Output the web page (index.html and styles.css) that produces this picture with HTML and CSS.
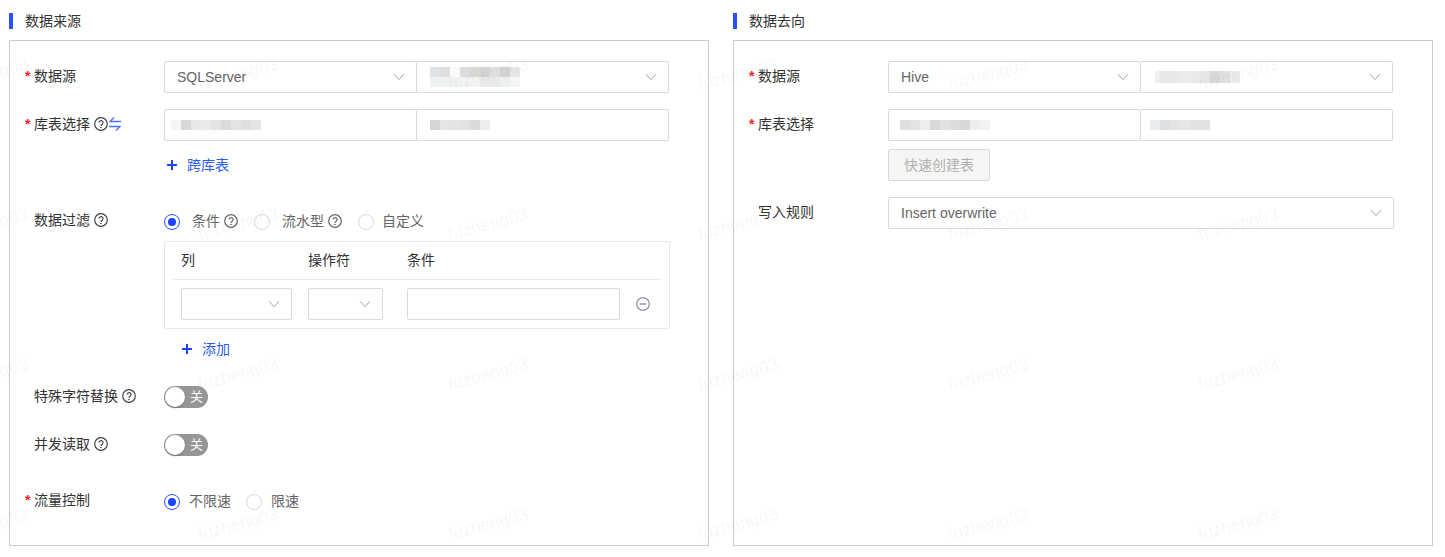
FILE: index.html
```html
<!DOCTYPE html>
<html lang="zh-CN">
<head>
<meta charset="utf-8">
<title>数据同步</title>
<link rel="stylesheet" href="styles.css">
</head>
<body>
<svg class="defs" width="0" height="0" aria-hidden="true">
  <symbol id="i-help" viewBox="0 0 14 14"><circle cx="7" cy="7" r="6.3" fill="none" stroke="currentColor" stroke-width="1.2"/><path d="M5 5.6a2 2 0 1 1 3.2 1.6c-.8.5-1.2.9-1.2 1.7" fill="none" stroke="currentColor" stroke-width="1.2"/><circle cx="7" cy="10.5" r=".8" fill="currentColor"/></symbol>
  <symbol id="i-down" viewBox="0 0 12 8"><path d="M1 1.2l5 5.4 5-5.4" fill="none" stroke="currentColor" stroke-width="1"/></symbol>
  <symbol id="i-plus" viewBox="0 0 12 12"><path d="M6 1v10M1 6h10" fill="none" stroke="currentColor" stroke-width="2"/></symbol>
  <symbol id="i-swap" viewBox="0 0 14 14"><path d="M13 4.5H2l4-4M1 9.500h11l-4 4" fill="none" stroke="currentColor" stroke-width="1.300"/></symbol>
  <symbol id="i-minus" viewBox="0 0 14 14"><circle cx="7" cy="7" r="6.300" fill="none" stroke="currentColor" stroke-width="1.200"/><path d="M4 7h6" fill="none" stroke="currentColor" stroke-width="1.400"/></symbol>
</svg>

<main class="page">
  <section class="panel">
    <h2 class="title">数据来源</h2>
    <div class="box">
      <div class="row row-first">
        <div class="label"><span class="star">*</span>数据源</div>
        <div class="split">
          <div class="select"><span class="value">SQLServer</span><svg class="chev"><use href="#i-down"/></svg></div>
          <div class="select"><span class="mosaic m-b"></span><svg class="chev"><use href="#i-down"/></svg></div>
        </div>
      </div>
      <div class="row row-next">
        <div class="label"><span class="star">*</span>库表选择<svg class="help"><use href="#i-help"/></svg><svg class="swap"><use href="#i-swap"/></svg></div>
        <div class="split">
          <div class="select"><span class="mosaic m-a"></span></div>
          <div class="select"><span class="mosaic m-c"></span></div>
        </div>
      </div>
      <div class="row row-tight">
        <div class="label"></div>
        <a class="link link-cross"><svg class="plus"><use href="#i-plus"/></svg>跨库表</a>
      </div>

      <div class="row row-filter">
        <div class="label label-sm"><span class="star"></span>数据过滤<svg class="help"><use href="#i-help"/></svg></div>
        <div class="stack">
          <div class="radios">
            <label class="radio radio-wide is-on"><i></i>条件<svg class="help help-soft"><use href="#i-help"/></svg></label>
            <label class="radio radio-wide"><i></i>流水型<svg class="help help-soft"><use href="#i-help"/></svg></label>
            <label class="radio radio-tight"><i></i>自定义</label>
          </div>
          <div class="table">
            <div class="thead"><span class="c1">列</span><span class="c2">操作符</span><span class="c3">条件</span></div>
            <div class="tbody">
              <div class="select c1"><svg class="chev"><use href="#i-down"/></svg></div>
              <div class="select c2"><svg class="chev"><use href="#i-down"/></svg></div>
              <div class="select c3"></div>
              <svg class="minus"><use href="#i-minus"/></svg>
            </div>
          </div>
          <a class="link link-add"><svg class="plus"><use href="#i-plus"/></svg>添加</a>
        </div>
      </div>

      <div class="row row-switch1">
        <div class="label label-sm"><span class="star"></span>特殊字符替换<svg class="help"><use href="#i-help"/></svg></div>
        <div class="switch"><i></i><span>关</span></div>
      </div>
      <div class="row row-switch2">
        <div class="label label-sm"><span class="star"></span>并发读取<svg class="help"><use href="#i-help"/></svg></div>
        <div class="switch"><i></i><span>关</span></div>
      </div>
      <div class="row row-flow">
        <div class="label label-sm"><span class="star">*</span>流量控制</div>
        <div class="radios">
          <label class="radio is-on"><i></i>不限速</label>
          <label class="radio"><i></i>限速</label>
        </div>
      </div>
    </div>
  </section>

  <section class="panel">
    <h2 class="title">数据去向</h2>
    <div class="box">
      <div class="row row-first">
        <div class="label"><span class="star">*</span>数据源</div>
        <div class="split">
          <div class="select"><span class="value">Hive</span><svg class="chev"><use href="#i-down"/></svg></div>
          <div class="select"><span class="mosaic m-e"></span><svg class="chev"><use href="#i-down"/></svg></div>
        </div>
      </div>
      <div class="row row-next">
        <div class="label"><span class="star">*</span>库表选择</div>
        <div class="split">
          <div class="select"><span class="mosaic m-d"></span></div>
          <div class="select"><span class="mosaic m-f"></span></div>
        </div>
      </div>
      <div class="row row-tight">
        <div class="label"></div>
        <button class="btn" type="button" disabled>快速创建表</button>
      </div>
      <div class="row row-next">
        <div class="label"><span class="star"></span>写入规则</div>
        <div class="select select-full"><span class="value">Insert overwrite</span><svg class="chev"><use href="#i-down"/></svg></div>
      </div>
    </div>
  </section>
</main>

<div class="marks" aria-hidden="true">
  <div class="marks-grid">
    <span>fuzheng03</span><span>fuzheng03</span><span>fuzheng03</span><span>fuzheng03</span><span>fuzheng03</span><span>fuzheng03</span>
    <span>fuzheng03</span><span>fuzheng03</span><span>fuzheng03</span><span>fuzheng03</span><span>fuzheng03</span><span>fuzheng03</span>
    <span>fuzheng03</span><span>fuzheng03</span><span>fuzheng03</span><span>fuzheng03</span><span>fuzheng03</span><span>fuzheng03</span>
    <span>fuzheng03</span><span>fuzheng03</span><span>fuzheng03</span><span>fuzheng03</span><span>fuzheng03</span><span>fuzheng03</span>
  </div>
</div>
</body>
</html>
```

FILE: styles.css
```css
* { box-sizing: border-box; }
html, body { margin: 0; height: 100%; }
body {
  position: relative;
  overflow: hidden;
  background: #fff;
  color: #333;
  font: 14px/20px "Liberation Sans", "Noto Sans CJK SC", sans-serif;
}
.defs { position: absolute; }

.page { display: flex; gap: 24px; padding: 13px 0 0 9px; }
.panel { width: 700px; flex: none; }
.title {
  margin: 0 0 11px;
  border-left: 4px solid #2b50ff;
  padding-left: 12px;
  font-size: 14px;
  font-weight: 400;
  line-height: 16px;
}
.box { height: 506px; border: 1px solid #ccc; padding: 0 0 0 15px; }

.row { display: flex; align-items: flex-start; }
.row-first { margin-top: 20px; }
.row-next { margin-top: 16px; }
.row-tight { margin-top: 8px; }
.row-filter { margin-top: 29px; }
.row-switch1 { margin-top: 21px; }
.row-switch2 { margin-top: 26px; }
.row-flow { margin-top: 34px; }

.label { width: 139px; flex: none; display: flex; align-items: center; line-height: 30px; white-space: nowrap; }
.label-sm { line-height: 20px; }
.star { width: 9px; flex: none; color: #f5222d; font-size: 14px; font-weight: 700; }
.help { width: 14px; height: 14px; margin-left: 4px; flex: none; color: #444; }
.help-soft { color: #666; }
.swap { width: 14px; height: 14px; flex: none; color: #4a70ff; }

.split { display: flex; width: 505px; }
.split .select { width: 253px; }
.split .select + .select { margin-left: -1px; }
.select {
  display: flex;
  align-items: center;
  justify-content: space-between;
  height: 32px;
  padding: 0 11px 0 12px;
  border: 1px solid #d9d9d9;
  border-radius: 2px;
  background: transparent;
  color: #666;
}
.select-full { width: 506px; }
.value { line-height: 30px; }
.chev { width: 12px; height: 8px; margin: 0 0 1px auto; flex: none; color: #a0a0a0; }

.mosaic { display: block; height: 10px; flex: none; margin-top: -1px; }
.m-a {
  width: 90px; margin-left: -6px;
  background: linear-gradient(90deg, #f5f5f5 0 10px, #d9d9d9 10px 20px, #e8e8e8 20px 30px, #ebebeb 30px 40px, #e4e4e4 40px 50px, #dadada 50px 60px, #e4e4e4 60px 70px, #dfdfdf 70px 80px, #e5e5e5 80px);
}
.m-b {
  width: 90px; height: 20px; margin-left: 1px;
  background:
    linear-gradient(90deg, #dde3e5 0 10px, #dedede 10px 20px, #fafafa 20px 30px, #dcdcdc 30px 40px, #d8d9d4 40px 50px, #d4d4d4 50px 60px, #e0e0e0 60px 70px, #d4d4d4 70px 80px, #e6e6e6 80px) 0 0 / 100% 10px no-repeat,
    linear-gradient(90deg, #eff2f3 0 30px, #f3f3f3 30px 50px, #e9e9e9 50px 70px, #eef1f2 70px 80px, #f5f5f5 80px) 0 10px / 100% 10px no-repeat;
}
.m-c {
  width: 60px; margin-left: 1px;
  background: linear-gradient(90deg, #d6d6d6 0 10px, #e6e6e6 10px 20px, #e4e4e4 20px 30px, #e2e2e2 30px 40px, #dadada 40px 50px, #eeeeee 50px);
}
.m-d {
  width: 90px; margin-left: -1px;
  background: linear-gradient(90deg, #dfdfdf 0 10px, #e3e3e3 10px 20px, #eeeeee 20px 30px, #d9d9d9 30px 40px, #e1e1e1 40px 50px, #dcdcdc 50px 60px, #d8d8d8 60px 70px, #ededed 70px 80px, #f2f2f2 80px);
}
.m-e {
  width: 85px; margin-left: 2px; height: 12px;
  background: linear-gradient(90deg, #f0f0f0 0 5px, #e8e8e8 5px 15px, #e9e9e9 15px 25px, #ececec 25px 35px, #eaeaea 35px 45px, #e6e6e6 45px 55px, #d8d8d8 55px 65px, #e0e0e0 65px 75px, #ececec 75px);
}
.m-f {
  width: 60px; margin-left: -3px;
  background: linear-gradient(90deg, #ececec 0 10px, #dce0e4 10px 20px, #e4e4e4 20px 30px, #e6e6e6 30px 40px, #e2e2e2 40px 50px, #e2e2e2 50px);
}

.link { display: flex; align-items: center; height: 32px; color: #2b5cf0; }
.plus { width: 12px; height: 12px; flex: none; color: #1a46f5; }
.link-cross { padding-left: 2px; }
.link-cross .plus { margin-right: 9px; }
.link-add { margin-top: 4px; padding-left: 17px; }
.link-add .plus { margin-right: 9px; }

.btn {
  width: 102px;
  height: 32px;
  padding: 0;
  border: 1px solid #d9d9d9;
  border-radius: 2px;
  background: #f5f5f5;
  color: #b0b0b0;
  font: inherit;
}

.stack { display: flex; flex-direction: column; }
.radios { display: flex; align-items: center; height: 22px; color: #666; }
.radio { display: flex; align-items: center; margin-right: 15px; white-space: nowrap; }
.radio i {
  position: relative;
  width: 16px;
  height: 16px;
  margin: 2px 9px 0 0;
  flex: none;
  border: 1px solid #d9d9d9;
  border-radius: 50%;
}
.radio-wide { margin-right: 16px; }
.radio-wide i { margin-right: 12px; }
.radio-tight i { margin-right: 8px; }
.radio.is-on i { border-color: #2b50ff; }
.radio.is-on i::after {
  content: "";
  position: absolute;
  inset: 3px;
  border-radius: 50%;
  background: #1a46ff;
}

.table {
  width: 506px;
  height: 88px;
  margin-top: 9px;
  padding: 0 8px;
  border: 1px solid #e8e8e8;
  border-radius: 2px;
}
.thead {
  display: flex;
  height: 38px;
  padding: 8px 0 0 8px;
  border-bottom: 1px solid #e8e8e8;
  line-height: 20px;
}
.tbody { display: flex; align-items: center; margin-top: 8px; padding-left: 8px; }
.c1 { width: 111px; margin-right: 16px; flex: none; }
.c2 { width: 75px; margin-right: 24px; flex: none; }
.c3 { width: 213px; margin-right: 16px; flex: none; }
.minus { width: 14px; height: 14px; flex: none; color: #8a8fa8; }

.switch {
  display: flex;
  align-items: center;
  width: 44px;
  height: 22px;
  padding: 0 1px;
  border-radius: 11px;
  background: #969696;
  color: #fff;
  font-size: 13px;
}
.switch i {
  width: 20px;
  height: 20px;
  flex: none;
  border-radius: 50%;
  background: #fff;
  box-shadow: 0 1px 2px rgba(0, 0, 0, .3);
}
.switch span { margin-left: 5px; line-height: 20px; }

.marks {
  position: absolute;
  inset: 0;
  overflow: hidden;
  pointer-events: none;
  color: rgba(0, 0, 0, .05);
  font-size: 17.5px;
}
.marks-grid {
  display: grid;
  grid-template-columns: repeat(6, 250px);
  grid-auto-rows: 150px;
  margin: -1px 0 0 -137px;
}
.marks span { display: flex; align-items: center; justify-content: center; transform: rotate(-15deg); }
```
